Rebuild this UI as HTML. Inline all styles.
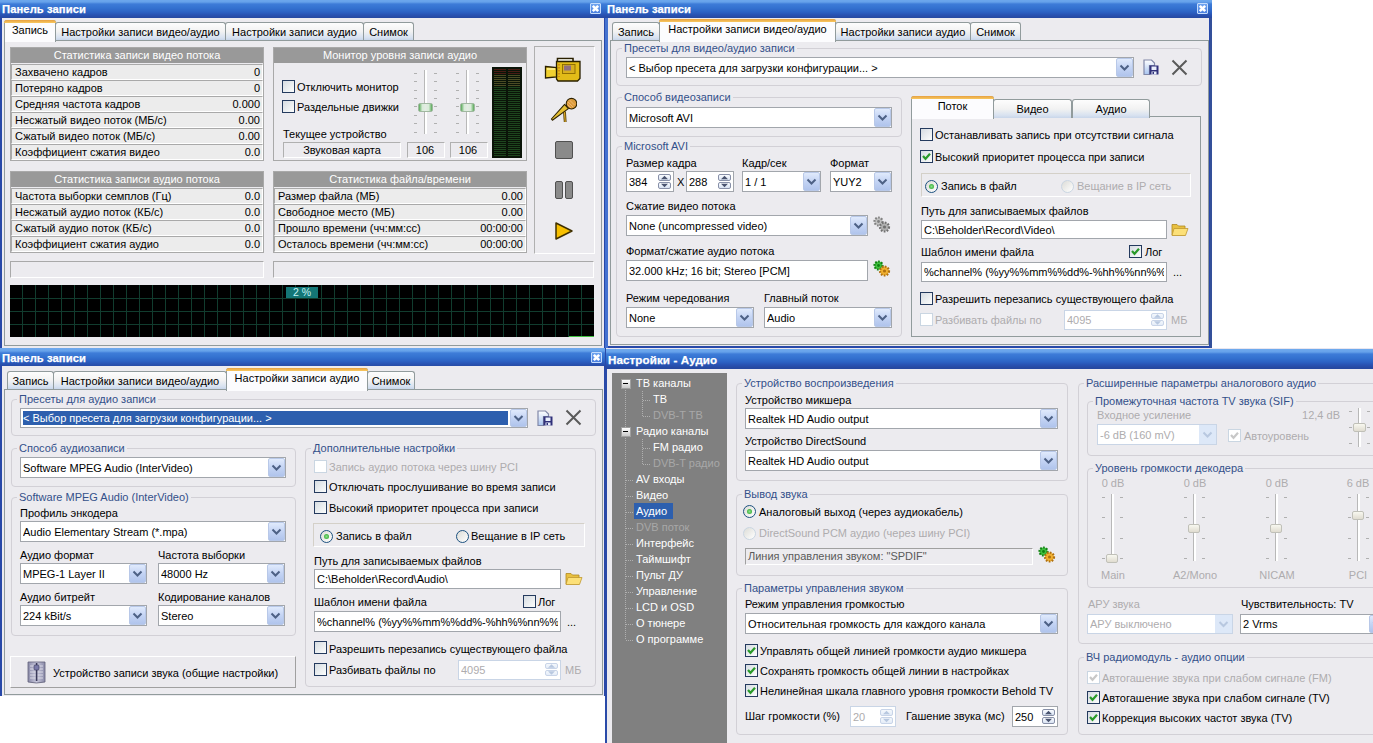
<!DOCTYPE html>
<html><head><meta charset="utf-8"><style>
html,body{margin:0;padding:0;width:1373px;height:743px;overflow:hidden;background:#fff;}
body{position:relative;font-family:"Liberation Sans", sans-serif;font-size:11px;}
div,svg{position:absolute;box-sizing:content-box;}
.t{white-space:nowrap;line-height:13px;}
</style></head><body>
<div style="left:0px;top:0px;width:607px;height:348px;background:#2848a8;"></div>
<div style="left:2px;top:17px;width:602px;height:331px;background:#ecebef;"></div>
<div style="left:0px;top:-1px;width:605px;height:19px;background:linear-gradient(to bottom,#70aaee 0px,#66a2ea 3px,#3e7cd8 5px,#3472d0 9px,#2c62c4 13px,#2852b2 16px,#2648a0 19px);"></div>
<div class="t" style="left:2px;top:3px;color:#fff;font-size:11.2px;font-weight:bold;-webkit-text-stroke:0.25px #fff;letter-spacing:0.1px;">Панель записи</div>
<div style="left:590px;top:3px;width:9px;height:9px;border:1px solid #c4dcfc;border-radius:1px;background:linear-gradient(#6ea4f0,#4a80e0);"></div>
<svg style="position:absolute;left:590px;top:3px" width="11" height="11"><path d="M2.8 2.8L8.2 8.2M8.2 2.8L2.8 8.2" stroke="#fff" stroke-width="2.6"/></svg>
<div style="left:4px;top:40px;width:596px;height:304px;border:1px solid #919b9c;background:#ecebef;"></div>
<div style="left:55px;top:22px;width:169px;height:17px;border:1px solid #919b9c;border-bottom:none;border-radius:3px 3px 0 0;background:linear-gradient(#fdfdfd,#f2f2f2 50%,#d8e2f0 85%,#c8d6ea);"></div>
<div class="t" style="left:-59.5px;width:400px;text-align:center;top:26px;color:#000;">Настройки записи видео/аудио</div>
<div style="left:225px;top:22px;width:137px;height:17px;border:1px solid #919b9c;border-bottom:none;border-radius:3px 3px 0 0;background:linear-gradient(#fdfdfd,#f2f2f2 50%,#d8e2f0 85%,#c8d6ea);"></div>
<div class="t" style="left:94.5px;width:400px;text-align:center;top:26px;color:#000;">Настройки записи аудио</div>
<div style="left:363px;top:22px;width:49px;height:17px;border:1px solid #919b9c;border-bottom:none;border-radius:3px 3px 0 0;background:linear-gradient(#fdfdfd,#f2f2f2 50%,#d8e2f0 85%,#c8d6ea);"></div>
<div class="t" style="left:188.5px;width:400px;text-align:center;top:26px;color:#000;">Снимок</div>
<div style="left:4px;top:20px;width:50px;height:21px;border:1px solid #919b9c;border-bottom:none;border-radius:3px 3px 0 0;background:#fcfcfe;"></div>
<div style="left:4px;top:20px;width:52px;height:3px;background:linear-gradient(#e6a040,#f8c860);border-radius:3px 3px 0 0;"></div>
<div class="t" style="left:-170.0px;width:400px;text-align:center;top:24px;color:#000;">Запись</div>
<div style="left:10px;top:47px;width:252px;height:112px;border:1px solid #a9a9a9;"></div>
<div style="left:11px;top:48px;width:252px;height:15px;background:#999;"></div>
<div class="t" style="left:-63.0px;width:400px;text-align:center;top:49px;color:#fff;">Статистика записи видео потока</div>
<div style="left:11px;top:64px;width:250px;height:14px;border:1px solid #a9a9a9;border-right-color:#fff;border-bottom-color:#fff;background:#ececec;"></div>
<div class="t" style="left:15px;top:65.7px;color:#000;">Захвачено кадров</div>
<div class="t" style="right:1113px;top:65.7px;color:#000;">0</div>
<div style="left:11px;top:80px;width:250px;height:14px;border:1px solid #a9a9a9;border-right-color:#fff;border-bottom-color:#fff;background:#ececec;"></div>
<div class="t" style="left:15px;top:81.7px;color:#000;">Потеряно кадров</div>
<div class="t" style="right:1113px;top:81.7px;color:#000;">0</div>
<div style="left:11px;top:96px;width:250px;height:14px;border:1px solid #a9a9a9;border-right-color:#fff;border-bottom-color:#fff;background:#ececec;"></div>
<div class="t" style="left:15px;top:97.7px;color:#000;">Средняя частота кадров</div>
<div class="t" style="right:1113px;top:97.7px;color:#000;">0.000</div>
<div style="left:11px;top:112px;width:250px;height:14px;border:1px solid #a9a9a9;border-right-color:#fff;border-bottom-color:#fff;background:#ececec;"></div>
<div class="t" style="left:15px;top:113.7px;color:#000;">Несжатый видео поток (МБ/с)</div>
<div class="t" style="right:1113px;top:113.7px;color:#000;">0.00</div>
<div style="left:11px;top:128px;width:250px;height:14px;border:1px solid #a9a9a9;border-right-color:#fff;border-bottom-color:#fff;background:#ececec;"></div>
<div class="t" style="left:15px;top:129.7px;color:#000;">Сжатый видео поток (МБ/с)</div>
<div class="t" style="right:1113px;top:129.7px;color:#000;">0.00</div>
<div style="left:11px;top:144px;width:250px;height:14px;border:1px solid #a9a9a9;border-right-color:#fff;border-bottom-color:#fff;background:#ececec;"></div>
<div class="t" style="left:15px;top:145.7px;color:#000;">Коэффициент сжатия видео</div>
<div class="t" style="right:1113px;top:145.7px;color:#000;">0.0</div>
<div style="left:10px;top:171px;width:252px;height:80px;border:1px solid #a9a9a9;"></div>
<div style="left:11px;top:172px;width:252px;height:15px;background:#999;"></div>
<div class="t" style="left:-63.0px;width:400px;text-align:center;top:173px;color:#fff;">Статистика записи аудио потока</div>
<div style="left:11px;top:188px;width:250px;height:14px;border:1px solid #a9a9a9;border-right-color:#fff;border-bottom-color:#fff;background:#ececec;"></div>
<div class="t" style="left:15px;top:189.7px;color:#000;">Частота выборки семплов (Гц)</div>
<div class="t" style="right:1113px;top:189.7px;color:#000;">0.0</div>
<div style="left:11px;top:204px;width:250px;height:14px;border:1px solid #a9a9a9;border-right-color:#fff;border-bottom-color:#fff;background:#ececec;"></div>
<div class="t" style="left:15px;top:205.7px;color:#000;">Несжатый аудио поток (КБ/с)</div>
<div class="t" style="right:1113px;top:205.7px;color:#000;">0.0</div>
<div style="left:11px;top:220px;width:250px;height:14px;border:1px solid #a9a9a9;border-right-color:#fff;border-bottom-color:#fff;background:#ececec;"></div>
<div class="t" style="left:15px;top:221.7px;color:#000;">Сжатый аудио поток (КБ/с)</div>
<div class="t" style="right:1113px;top:221.7px;color:#000;">0.0</div>
<div style="left:11px;top:236px;width:250px;height:14px;border:1px solid #a9a9a9;border-right-color:#fff;border-bottom-color:#fff;background:#ececec;"></div>
<div class="t" style="left:15px;top:237.7px;color:#000;">Коэффициент сжатия аудио</div>
<div class="t" style="right:1113px;top:237.7px;color:#000;">0.0</div>
<div style="left:273px;top:171px;width:252px;height:80px;border:1px solid #a9a9a9;"></div>
<div style="left:274px;top:172px;width:252px;height:15px;background:#999;"></div>
<div class="t" style="left:200.0px;width:400px;text-align:center;top:173px;color:#fff;">Статистика файла/времени</div>
<div style="left:274px;top:188px;width:250px;height:14px;border:1px solid #a9a9a9;border-right-color:#fff;border-bottom-color:#fff;background:#ececec;"></div>
<div class="t" style="left:278px;top:189.7px;color:#000;">Размер файла (МБ)</div>
<div class="t" style="right:850px;top:189.7px;color:#000;">0.00</div>
<div style="left:274px;top:204px;width:250px;height:14px;border:1px solid #a9a9a9;border-right-color:#fff;border-bottom-color:#fff;background:#ececec;"></div>
<div class="t" style="left:278px;top:205.7px;color:#000;">Свободное место (МБ)</div>
<div class="t" style="right:850px;top:205.7px;color:#000;">0.00</div>
<div style="left:274px;top:220px;width:250px;height:14px;border:1px solid #a9a9a9;border-right-color:#fff;border-bottom-color:#fff;background:#ececec;"></div>
<div class="t" style="left:278px;top:221.7px;color:#000;">Прошло времени (чч:мм:сс)</div>
<div class="t" style="right:850px;top:221.7px;color:#000;">00:00:00</div>
<div style="left:274px;top:236px;width:250px;height:14px;border:1px solid #a9a9a9;border-right-color:#fff;border-bottom-color:#fff;background:#ececec;"></div>
<div class="t" style="left:278px;top:237.7px;color:#000;">Осталось времени (чч:мм:сс)</div>
<div class="t" style="right:850px;top:237.7px;color:#000;">00:00:00</div>
<div style="left:273px;top:47px;width:252px;height:112px;border:1px solid #a9a9a9;"></div>
<div style="left:274px;top:48px;width:252px;height:15px;background:#999;"></div>
<div class="t" style="left:200px;width:400px;text-align:center;top:49px;color:#fff;">Монитор уровня записи аудио</div>
<div style="left:282px;top:80px;width:11px;height:11px;border:1px solid #243a5e;background:linear-gradient(135deg,#d6dce2,#fcfdfc);"></div>
<div class="t" style="left:297px;top:81px;color:#000;">Отключить монитор</div>
<div style="left:282px;top:100px;width:11px;height:11px;border:1px solid #243a5e;background:linear-gradient(135deg,#d6dce2,#fcfdfc);"></div>
<div class="t" style="left:297px;top:101px;color:#000;">Раздельные движки</div>
<div class="t" style="left:283px;top:128px;color:#000;">Текущее устройство</div>
<div style="left:283px;top:142px;width:116px;height:14px;border:1px solid #fff;border-top-color:#b0b0b0;border-left-color:#b0b0b0;"></div>
<div class="t" style="left:142px;width:400px;text-align:center;top:144px;color:#000;">Звуковая карта</div>
<div style="left:407px;top:142px;width:36px;height:14px;border:1px solid #fff;border-top-color:#b0b0b0;border-left-color:#b0b0b0;"></div>
<div class="t" style="left:225px;width:400px;text-align:center;top:144px;color:#000;">106</div>
<div style="left:450px;top:142px;width:36px;height:14px;border:1px solid #fff;border-top-color:#b0b0b0;border-left-color:#b0b0b0;"></div>
<div class="t" style="left:268px;width:400px;text-align:center;top:144px;color:#000;">106</div>
<div style="left:424px;top:70px;width:1px;height:64px;background:#b8b8b8;"></div>
<div style="left:425px;top:70px;width:2px;height:64px;background:#fff;"></div>
<div style="left:414px;top:73px;width:3px;height:1px;background:#b0b0b0;"></div>
<div style="left:434px;top:73px;width:3px;height:1px;background:#b0b0b0;"></div>
<div style="left:414px;top:81px;width:3px;height:1px;background:#b0b0b0;"></div>
<div style="left:434px;top:81px;width:3px;height:1px;background:#b0b0b0;"></div>
<div style="left:414px;top:90px;width:3px;height:1px;background:#b0b0b0;"></div>
<div style="left:434px;top:90px;width:3px;height:1px;background:#b0b0b0;"></div>
<div style="left:414px;top:98px;width:3px;height:1px;background:#b0b0b0;"></div>
<div style="left:434px;top:98px;width:3px;height:1px;background:#b0b0b0;"></div>
<div style="left:414px;top:106px;width:3px;height:1px;background:#b0b0b0;"></div>
<div style="left:434px;top:106px;width:3px;height:1px;background:#b0b0b0;"></div>
<div style="left:414px;top:115px;width:3px;height:1px;background:#b0b0b0;"></div>
<div style="left:434px;top:115px;width:3px;height:1px;background:#b0b0b0;"></div>
<div style="left:414px;top:123px;width:3px;height:1px;background:#b0b0b0;"></div>
<div style="left:434px;top:123px;width:3px;height:1px;background:#b0b0b0;"></div>
<div style="left:414px;top:132px;width:3px;height:1px;background:#b0b0b0;"></div>
<div style="left:434px;top:132px;width:3px;height:1px;background:#b0b0b0;"></div>
<div style="left:418px;top:103px;width:13px;height:7px;border:1px solid #a0b8a0;border-radius:2px;background:linear-gradient(90deg,#58a858,#d8ecd8 25%,#e4ece4 50%,#d8ecd8 75%,#58a858);"></div>
<div style="left:466px;top:70px;width:1px;height:64px;background:#b8b8b8;"></div>
<div style="left:467px;top:70px;width:2px;height:64px;background:#fff;"></div>
<div style="left:456px;top:73px;width:3px;height:1px;background:#b0b0b0;"></div>
<div style="left:476px;top:73px;width:3px;height:1px;background:#b0b0b0;"></div>
<div style="left:456px;top:81px;width:3px;height:1px;background:#b0b0b0;"></div>
<div style="left:476px;top:81px;width:3px;height:1px;background:#b0b0b0;"></div>
<div style="left:456px;top:90px;width:3px;height:1px;background:#b0b0b0;"></div>
<div style="left:476px;top:90px;width:3px;height:1px;background:#b0b0b0;"></div>
<div style="left:456px;top:98px;width:3px;height:1px;background:#b0b0b0;"></div>
<div style="left:476px;top:98px;width:3px;height:1px;background:#b0b0b0;"></div>
<div style="left:456px;top:106px;width:3px;height:1px;background:#b0b0b0;"></div>
<div style="left:476px;top:106px;width:3px;height:1px;background:#b0b0b0;"></div>
<div style="left:456px;top:115px;width:3px;height:1px;background:#b0b0b0;"></div>
<div style="left:476px;top:115px;width:3px;height:1px;background:#b0b0b0;"></div>
<div style="left:456px;top:123px;width:3px;height:1px;background:#b0b0b0;"></div>
<div style="left:476px;top:123px;width:3px;height:1px;background:#b0b0b0;"></div>
<div style="left:456px;top:132px;width:3px;height:1px;background:#b0b0b0;"></div>
<div style="left:476px;top:132px;width:3px;height:1px;background:#b0b0b0;"></div>
<div style="left:460px;top:103px;width:13px;height:7px;border:1px solid #a0b8a0;border-radius:2px;background:linear-gradient(90deg,#58a858,#d8ecd8 25%,#e4ece4 50%,#d8ecd8 75%,#58a858);"></div>
<div style="left:492px;top:67px;width:30px;height:91px;background:#0a1408;"></div>
<svg style="position:absolute;left:492px;top:67px" width="30" height="91"><rect x="2" y="2" width="12" height="1" fill="#481c14"/><rect x="16" y="2" width="12" height="1" fill="#481c14"/><rect x="2" y="4" width="12" height="1" fill="#481c14"/><rect x="16" y="4" width="12" height="1" fill="#481c14"/><rect x="2" y="6" width="12" height="1" fill="#481c14"/><rect x="16" y="6" width="12" height="1" fill="#481c14"/><rect x="2" y="8" width="12" height="1" fill="#4a4c24"/><rect x="16" y="8" width="12" height="1" fill="#4a4c24"/><rect x="2" y="10" width="12" height="1" fill="#4a4c24"/><rect x="16" y="10" width="12" height="1" fill="#4a4c24"/><rect x="2" y="12" width="12" height="1" fill="#4a4c24"/><rect x="16" y="12" width="12" height="1" fill="#4a4c24"/><rect x="2" y="14" width="12" height="1" fill="#4a4c24"/><rect x="16" y="14" width="12" height="1" fill="#4a4c24"/><rect x="2" y="16" width="12" height="1" fill="#4a4c24"/><rect x="16" y="16" width="12" height="1" fill="#4a4c24"/><rect x="2" y="18" width="12" height="1" fill="#4a4c24"/><rect x="16" y="18" width="12" height="1" fill="#4a4c24"/><rect x="2" y="20" width="12" height="1" fill="#1e461e"/><rect x="16" y="20" width="12" height="1" fill="#1e461e"/><rect x="2" y="22" width="12" height="1" fill="#1e461e"/><rect x="16" y="22" width="12" height="1" fill="#1e461e"/><rect x="2" y="24" width="12" height="1" fill="#1e461e"/><rect x="16" y="24" width="12" height="1" fill="#1e461e"/><rect x="2" y="26" width="12" height="1" fill="#1e461e"/><rect x="16" y="26" width="12" height="1" fill="#1e461e"/><rect x="2" y="28" width="12" height="1" fill="#1e461e"/><rect x="16" y="28" width="12" height="1" fill="#1e461e"/><rect x="2" y="30" width="12" height="1" fill="#1e461e"/><rect x="16" y="30" width="12" height="1" fill="#1e461e"/><rect x="2" y="32" width="12" height="1" fill="#1e461e"/><rect x="16" y="32" width="12" height="1" fill="#1e461e"/><rect x="2" y="34" width="12" height="1" fill="#1e461e"/><rect x="16" y="34" width="12" height="1" fill="#1e461e"/><rect x="2" y="36" width="12" height="1" fill="#1e461e"/><rect x="16" y="36" width="12" height="1" fill="#1e461e"/><rect x="2" y="38" width="12" height="1" fill="#1e461e"/><rect x="16" y="38" width="12" height="1" fill="#1e461e"/><rect x="2" y="40" width="12" height="1" fill="#1e461e"/><rect x="16" y="40" width="12" height="1" fill="#1e461e"/><rect x="2" y="42" width="12" height="1" fill="#1e461e"/><rect x="16" y="42" width="12" height="1" fill="#1e461e"/><rect x="2" y="44" width="12" height="1" fill="#1e461e"/><rect x="16" y="44" width="12" height="1" fill="#1e461e"/><rect x="2" y="46" width="12" height="1" fill="#1e461e"/><rect x="16" y="46" width="12" height="1" fill="#1e461e"/><rect x="2" y="48" width="12" height="1" fill="#1e461e"/><rect x="16" y="48" width="12" height="1" fill="#1e461e"/><rect x="2" y="50" width="12" height="1" fill="#1e461e"/><rect x="16" y="50" width="12" height="1" fill="#1e461e"/><rect x="2" y="52" width="12" height="1" fill="#1e461e"/><rect x="16" y="52" width="12" height="1" fill="#1e461e"/><rect x="2" y="54" width="12" height="1" fill="#1e461e"/><rect x="16" y="54" width="12" height="1" fill="#1e461e"/><rect x="2" y="56" width="12" height="1" fill="#1e461e"/><rect x="16" y="56" width="12" height="1" fill="#1e461e"/><rect x="2" y="58" width="12" height="1" fill="#1e461e"/><rect x="16" y="58" width="12" height="1" fill="#1e461e"/><rect x="2" y="60" width="12" height="1" fill="#1e461e"/><rect x="16" y="60" width="12" height="1" fill="#1e461e"/><rect x="2" y="62" width="12" height="1" fill="#1e461e"/><rect x="16" y="62" width="12" height="1" fill="#1e461e"/><rect x="2" y="64" width="12" height="1" fill="#1e461e"/><rect x="16" y="64" width="12" height="1" fill="#1e461e"/><rect x="2" y="66" width="12" height="1" fill="#1e461e"/><rect x="16" y="66" width="12" height="1" fill="#1e461e"/><rect x="2" y="68" width="12" height="1" fill="#1e461e"/><rect x="16" y="68" width="12" height="1" fill="#1e461e"/><rect x="2" y="70" width="12" height="1" fill="#1e461e"/><rect x="16" y="70" width="12" height="1" fill="#1e461e"/><rect x="2" y="72" width="12" height="1" fill="#1e461e"/><rect x="16" y="72" width="12" height="1" fill="#1e461e"/><rect x="2" y="74" width="12" height="1" fill="#1e461e"/><rect x="16" y="74" width="12" height="1" fill="#1e461e"/><rect x="2" y="76" width="12" height="1" fill="#1e461e"/><rect x="16" y="76" width="12" height="1" fill="#1e461e"/><rect x="2" y="78" width="12" height="1" fill="#1e461e"/><rect x="16" y="78" width="12" height="1" fill="#1e461e"/><rect x="2" y="80" width="12" height="1" fill="#1e461e"/><rect x="16" y="80" width="12" height="1" fill="#1e461e"/><rect x="2" y="82" width="12" height="1" fill="#1e461e"/><rect x="16" y="82" width="12" height="1" fill="#1e461e"/><rect x="2" y="84" width="12" height="1" fill="#1e461e"/><rect x="16" y="84" width="12" height="1" fill="#1e461e"/><rect x="2" y="86" width="12" height="1" fill="#1e461e"/><rect x="16" y="86" width="12" height="1" fill="#1e461e"/><rect x="2" y="88" width="12" height="1" fill="#1e461e"/><rect x="16" y="88" width="12" height="1" fill="#1e461e"/></svg>
<div style="left:534px;top:46px;width:59px;height:206px;border:1px solid #b0b0b0;border-right-color:#fff;border-bottom-color:#fff;"></div>
<svg style="position:absolute;left:544px;top:56px" width="38" height="28" viewBox="0 0 38 28">
<path d="M13.5 7V2.5H29V6" stroke="#2a2000" stroke-width="1.6" fill="none"/>
<path d="M15 7V4.2H27.5V6.5" stroke="#f8f8e8" stroke-width="1.2" fill="none"/>
<path d="M12.5 5.5H36V22.5L33.5 25H14L12.5 23Z" fill="#e2bc18" stroke="#2a2000" stroke-width="1.3"/>
<path d="M1.5 10.5L12.5 11.5V21L1.5 22Z" fill="#f0d030" stroke="#2a2000" stroke-width="1.3"/>
<path d="M3 13H11" stroke="#fff4a0" stroke-width="1.5"/>
<rect x="18.5" y="8.5" width="12.5" height="9" fill="#d8b020" stroke="#8a6a00" stroke-width="0.9"/>
<rect x="20" y="9.5" width="7" height="5" fill="#907080"/>
<path d="M15 8V21" stroke="#c87010" stroke-width="1.2" stroke-dasharray="1.5 1.5"/>
</svg>
<svg style="position:absolute;left:549px;top:95px" width="28" height="30" viewBox="0 0 28 30">
<path d="M15.5 16.5L16.2 27" stroke="#4a3400" stroke-width="2.8"/><path d="M15.5 16.5L16.2 27" stroke="#d8a828" stroke-width="1.3"/>
<path d="M15.6 9.4L19.4 13.6L3.4 25.2L2.4 24Z" fill="#e6c034" stroke="#2e2200" stroke-width="1.1" stroke-linejoin="round"/>
<circle cx="22.5" cy="8.7" r="5.3" fill="#dc9c3c" stroke="#2e2200" stroke-width="1.1"/>
<path d="M19 7L24 12M20.5 5L25.5 10M18.5 9.5L22 13" stroke="#f0b878" stroke-width="0.9"/>
</svg>
<div style="left:555px;top:141px;width:16px;height:16px;border:1px solid #505050;border-radius:2px;background:#8a8a8a;"></div>
<div style="left:555px;top:181px;width:6px;height:16px;border:1px solid #505050;border-radius:2px;background:#8a8a8a;"></div>
<div style="left:565px;top:181px;width:6px;height:16px;border:1px solid #505050;border-radius:2px;background:#8a8a8a;"></div>
<svg style="position:absolute;left:554px;top:221px" width="20" height="20"><path d="M2 2L18 10L2 18z" fill="#f8c000" stroke="#403000" stroke-width="1.5" stroke-linejoin="round"/></svg>
<div style="left:10px;top:261px;width:252px;height:15px;border:1px solid #fff;border-top-color:#a9a9a9;border-left-color:#a9a9a9;"></div>
<div style="left:273px;top:261px;width:319px;height:15px;border:1px solid #fff;border-top-color:#a9a9a9;border-left-color:#a9a9a9;"></div>
<svg style="position:absolute;left:10px;top:285px" width="584" height="52" shape-rendering="crispEdges"><rect width="584" height="52" fill="#000"/><rect x="-1" y="0" width="1" height="52" fill="#113c2e"/><rect x="12" y="0" width="1" height="52" fill="#113c2e"/><rect x="25" y="0" width="1" height="52" fill="#113c2e"/><rect x="38" y="0" width="1" height="52" fill="#113c2e"/><rect x="51" y="0" width="1" height="52" fill="#113c2e"/><rect x="64" y="0" width="1" height="52" fill="#113c2e"/><rect x="77" y="0" width="1" height="52" fill="#113c2e"/><rect x="90" y="0" width="1" height="52" fill="#113c2e"/><rect x="103" y="0" width="1" height="52" fill="#113c2e"/><rect x="116" y="0" width="1" height="52" fill="#113c2e"/><rect x="129" y="0" width="1" height="52" fill="#113c2e"/><rect x="142" y="0" width="1" height="52" fill="#113c2e"/><rect x="155" y="0" width="1" height="52" fill="#113c2e"/><rect x="168" y="0" width="1" height="52" fill="#113c2e"/><rect x="181" y="0" width="1" height="52" fill="#113c2e"/><rect x="194" y="0" width="1" height="52" fill="#113c2e"/><rect x="207" y="0" width="1" height="52" fill="#113c2e"/><rect x="220" y="0" width="1" height="52" fill="#113c2e"/><rect x="233" y="0" width="1" height="52" fill="#113c2e"/><rect x="246" y="0" width="1" height="52" fill="#113c2e"/><rect x="259" y="0" width="1" height="52" fill="#113c2e"/><rect x="272" y="0" width="1" height="52" fill="#113c2e"/><rect x="285" y="0" width="1" height="52" fill="#113c2e"/><rect x="298" y="0" width="1" height="52" fill="#113c2e"/><rect x="311" y="0" width="1" height="52" fill="#113c2e"/><rect x="324" y="0" width="1" height="52" fill="#113c2e"/><rect x="337" y="0" width="1" height="52" fill="#113c2e"/><rect x="350" y="0" width="1" height="52" fill="#113c2e"/><rect x="363" y="0" width="1" height="52" fill="#113c2e"/><rect x="376" y="0" width="1" height="52" fill="#113c2e"/><rect x="389" y="0" width="1" height="52" fill="#113c2e"/><rect x="402" y="0" width="1" height="52" fill="#113c2e"/><rect x="415" y="0" width="1" height="52" fill="#113c2e"/><rect x="428" y="0" width="1" height="52" fill="#113c2e"/><rect x="441" y="0" width="1" height="52" fill="#113c2e"/><rect x="454" y="0" width="1" height="52" fill="#113c2e"/><rect x="467" y="0" width="1" height="52" fill="#113c2e"/><rect x="480" y="0" width="1" height="52" fill="#113c2e"/><rect x="493" y="0" width="1" height="52" fill="#113c2e"/><rect x="506" y="0" width="1" height="52" fill="#113c2e"/><rect x="519" y="0" width="1" height="52" fill="#113c2e"/><rect x="532" y="0" width="1" height="52" fill="#113c2e"/><rect x="545" y="0" width="1" height="52" fill="#113c2e"/><rect x="558" y="0" width="1" height="52" fill="#113c2e"/><rect x="571" y="0" width="1" height="52" fill="#113c2e"/><rect x="584" y="0" width="1" height="52" fill="#113c2e"/><rect x="0" y="13" width="584" height="1" fill="#113c2e"/><rect x="0" y="26" width="584" height="1" fill="#113c2e"/><rect x="0" y="39" width="584" height="1" fill="#113c2e"/><rect x="276" y="2" width="32" height="11" fill="#147676"/><rect x="559" y="51" width="25" height="1" fill="#40c040"/></svg>
<div class="t" style="left:102px;width:400px;text-align:center;top:286px;color:#c8f4f4;font-size:10.5px;">2 %</div>
<div style="left:605px;top:0px;width:607px;height:348px;background:#2848a8;"></div>
<div style="left:605px;top:0px;width:3px;height:348px;background:#4472d0;"></div>
<div style="left:1210px;top:0px;width:2px;height:348px;background:#34509a;"></div>
<div style="left:608px;top:17px;width:601px;height:329px;background:#ecebef;"></div>
<div style="left:605px;top:-1px;width:607px;height:19px;background:linear-gradient(to bottom,#70aaee 0px,#66a2ea 3px,#3e7cd8 5px,#3472d0 9px,#2c62c4 13px,#2852b2 16px,#2648a0 19px);"></div>
<div class="t" style="left:607px;top:3px;color:#fff;font-size:11.2px;font-weight:bold;-webkit-text-stroke:0.25px #fff;letter-spacing:0.1px;">Панель записи</div>
<div style="left:1197px;top:3px;width:9px;height:9px;border:1px solid #c4dcfc;border-radius:1px;background:linear-gradient(#6ea4f0,#4a80e0);"></div>
<svg style="position:absolute;left:1197px;top:3px" width="11" height="11"><path d="M2.8 2.8L8.2 8.2M8.2 2.8L2.8 8.2" stroke="#fff" stroke-width="2.6"/></svg>
<div style="left:610px;top:40px;width:597px;height:303px;border:1px solid #919b9c;background:#ecebef;"></div>
<div style="left:612px;top:22px;width:46px;height:17px;border:1px solid #919b9c;border-bottom:none;border-radius:3px 3px 0 0;background:linear-gradient(#fdfdfd,#f2f2f2 50%,#d8e2f0 85%,#c8d6ea);"></div>
<div class="t" style="left:436.0px;width:400px;text-align:center;top:26px;color:#000;">Запись</div>
<div style="left:835px;top:22px;width:134px;height:17px;border:1px solid #919b9c;border-bottom:none;border-radius:3px 3px 0 0;background:linear-gradient(#fdfdfd,#f2f2f2 50%,#d8e2f0 85%,#c8d6ea);"></div>
<div class="t" style="left:703.0px;width:400px;text-align:center;top:26px;color:#000;">Настройки записи аудио</div>
<div style="left:970px;top:22px;width:49px;height:17px;border:1px solid #919b9c;border-bottom:none;border-radius:3px 3px 0 0;background:linear-gradient(#fdfdfd,#f2f2f2 50%,#d8e2f0 85%,#c8d6ea);"></div>
<div class="t" style="left:795.5px;width:400px;text-align:center;top:26px;color:#000;">Снимок</div>
<div style="left:659px;top:19px;width:175px;height:22px;border:1px solid #919b9c;border-bottom:none;border-radius:3px 3px 0 0;background:#fcfcfe;"></div>
<div style="left:659px;top:19px;width:177px;height:3px;background:linear-gradient(#e6a040,#f8c860);border-radius:3px 3px 0 0;"></div>
<div class="t" style="left:547.5px;width:400px;text-align:center;top:23px;color:#000;">Настройки записи видео/аудио</div>
<div style="left:616px;top:48px;width:584px;height:36px;border:1px solid #d2d0d6;border-radius:4px;"></div>
<div class="t" style="left:622px;top:42px;padding:0 2px;background:#ecebef;color:#33508a;">Пресеты для видео/аудио записи</div>
<svg style="position:absolute;left:1143px;top:59px" width="17" height="17" viewBox="0 0 17 17">
<defs><linearGradient id="sg1143" x1="0" y1="0" x2="0" y2="1"><stop offset="0" stop-color="#ffffff"/><stop offset="1" stop-color="#a8c4f0"/></linearGradient></defs>
<path d="M1 1H8.5L11.5 4V6.5H6.5V15.5H1Z" fill="url(#sg1143)" stroke="#8088a8" stroke-width="1.2"/>
<path d="M6.5 6.5H15.5V15.5H6.5Z" fill="#30307a"/>
<rect x="8.5" y="7.5" width="5" height="3.5" fill="#e8eefc"/>
<rect x="8.5" y="12.5" width="5" height="3" fill="#e8eefc"/><rect x="9.5" y="13" width="1.5" height="2" fill="#30307a"/>
</svg>
<svg style="position:absolute;left:1171px;top:59px" width="17" height="17"><path d="M1.5 1.5L15.5 15.5M15.5 1.5L1.5 15.5" stroke="#5a5a5a" stroke-width="2"/></svg>
<div style="left:626px;top:57px;width:506px;height:19px;border:1px solid #a2a6ac;background:#fff;"></div>
<div style="left:1116px;top:58px;width:15px;height:17px;border:1px solid #b8c8e8;border-radius:2px;background:linear-gradient(#e0eafc,#c4d4f4 50%,#b0c4ec);"></div>
<svg style="position:absolute;left:1116px;top:58px" width="17" height="19"><path d="M4.5 7.5L8.5 11.5L12.5 7.5" stroke="#4d6185" stroke-width="2" fill="none"/></svg>
<div class="t" style="left:629px;top:61.5px;color:#000;width:485px;overflow:hidden;">&lt; Выбор пресета для загрузки конфигурации... &gt;</div>
<div style="left:616px;top:97px;width:284px;height:38px;border:1px solid #d2d0d6;border-radius:4px;"></div>
<div class="t" style="left:622px;top:91px;padding:0 2px;background:#ecebef;color:#33508a;">Способ видеозаписи</div>
<div style="left:626px;top:107px;width:264px;height:19px;border:1px solid #a2a6ac;background:#fff;"></div>
<div style="left:874px;top:108px;width:15px;height:17px;border:1px solid #b8c8e8;border-radius:2px;background:linear-gradient(#e0eafc,#c4d4f4 50%,#b0c4ec);"></div>
<svg style="position:absolute;left:874px;top:108px" width="17" height="19"><path d="M4.5 7.5L8.5 11.5L12.5 7.5" stroke="#4d6185" stroke-width="2" fill="none"/></svg>
<div class="t" style="left:629px;top:111.5px;color:#000;width:243px;overflow:hidden;">Microsoft AVI</div>
<div style="left:616px;top:146px;width:284px;height:189px;border:1px solid #d2d0d6;border-radius:4px;"></div>
<div class="t" style="left:622px;top:140px;padding:0 2px;background:#ecebef;color:#33508a;">Microsoft AVI</div>
<div class="t" style="left:626px;top:157px;color:#000;">Размер кадра</div>
<div class="t" style="left:742px;top:157px;color:#000;">Кадр/сек</div>
<div class="t" style="left:830px;top:157px;color:#000;">Формат</div>
<div style="left:626px;top:171px;width:46px;height:19px;border:1px solid #a2a6ac;background:#fff;"></div>
<div class="t" style="left:629px;top:175.5px;color:#000;width:42px;overflow:hidden;">384</div>
<div style="left:658px;top:174px;width:11px;height:5px;border:1px solid #8890a8;border-radius:2px;background:linear-gradient(#fafcff,#d8e2f2);"></div>
<div style="left:658px;top:182px;width:11px;height:5px;border:1px solid #8890a8;border-radius:2px;background:linear-gradient(#fafcff,#d8e2f2);"></div>
<svg style="position:absolute;left:658px;top:174px" width="13" height="17"><path d="M3.0 5.3L6.5 1.7L10.0 5.3Z M3.0 9.7L6.5 13.3L10.0 9.7Z" fill="#4a5470"/></svg>
<div class="t" style="left:677px;top:176px;color:#000;">X</div>
<div style="left:686px;top:171px;width:46px;height:19px;border:1px solid #a2a6ac;background:#fff;"></div>
<div class="t" style="left:689px;top:175.5px;color:#000;width:42px;overflow:hidden;">288</div>
<div style="left:718px;top:174px;width:11px;height:5px;border:1px solid #8890a8;border-radius:2px;background:linear-gradient(#fafcff,#d8e2f2);"></div>
<div style="left:718px;top:182px;width:11px;height:5px;border:1px solid #8890a8;border-radius:2px;background:linear-gradient(#fafcff,#d8e2f2);"></div>
<svg style="position:absolute;left:718px;top:174px" width="13" height="17"><path d="M3.0 5.3L6.5 1.7L10.0 5.3Z M3.0 9.7L6.5 13.3L10.0 9.7Z" fill="#4a5470"/></svg>
<div style="left:742px;top:171px;width:77px;height:19px;border:1px solid #a2a6ac;background:#fff;"></div>
<div style="left:803px;top:172px;width:15px;height:17px;border:1px solid #b8c8e8;border-radius:2px;background:linear-gradient(#e0eafc,#c4d4f4 50%,#b0c4ec);"></div>
<svg style="position:absolute;left:803px;top:172px" width="17" height="19"><path d="M4.5 7.5L8.5 11.5L12.5 7.5" stroke="#4d6185" stroke-width="2" fill="none"/></svg>
<div class="t" style="left:745px;top:175.5px;color:#000;width:56px;overflow:hidden;">1 / 1</div>
<div style="left:830px;top:171px;width:60px;height:19px;border:1px solid #a2a6ac;background:#fff;"></div>
<div style="left:874px;top:172px;width:15px;height:17px;border:1px solid #b8c8e8;border-radius:2px;background:linear-gradient(#e0eafc,#c4d4f4 50%,#b0c4ec);"></div>
<svg style="position:absolute;left:874px;top:172px" width="17" height="19"><path d="M4.5 7.5L8.5 11.5L12.5 7.5" stroke="#4d6185" stroke-width="2" fill="none"/></svg>
<div class="t" style="left:833px;top:175.5px;color:#000;width:39px;overflow:hidden;">YUY2</div>
<div class="t" style="left:626px;top:200px;color:#000;">Сжатие видео потока</div>
<div style="left:626px;top:215px;width:240px;height:19px;border:1px solid #a2a6ac;background:#fff;"></div>
<div style="left:850px;top:216px;width:15px;height:17px;border:1px solid #b8c8e8;border-radius:2px;background:linear-gradient(#e0eafc,#c4d4f4 50%,#b0c4ec);"></div>
<svg style="position:absolute;left:850px;top:216px" width="17" height="19"><path d="M4.5 7.5L8.5 11.5L12.5 7.5" stroke="#4d6185" stroke-width="2" fill="none"/></svg>
<div class="t" style="left:629px;top:219.5px;color:#000;width:219px;overflow:hidden;">None (uncompressed video)</div>
<svg style="position:absolute;left:872px;top:215px" width="20" height="20"><circle cx="6.5" cy="6.5" r="4" fill="#c0c0c0" stroke="#808080" stroke-width="2.2" stroke-dasharray="1.6 1.4"/><circle cx="6.5" cy="6.5" r="1.40" fill="#808080"/><circle cx="12.5" cy="12" r="4.5" fill="#b0b0b0" stroke="#707070" stroke-width="2.2" stroke-dasharray="1.6 1.4"/><circle cx="12.5" cy="12" r="1.57" fill="#707070"/></svg>
<div class="t" style="left:626px;top:245px;color:#000;">Формат/сжатие аудио потока</div>
<div style="left:626px;top:260px;width:240px;height:19px;border:1px solid #a2a6ac;background:#fff;"></div>
<div class="t" style="left:629px;top:264.5px;color:#000;width:236px;overflow:hidden;">32.000 kHz; 16 bit; Stereo [PCM]</div>
<svg style="position:absolute;left:872px;top:259px" width="20" height="20"><circle cx="6.5" cy="6.5" r="4" fill="#40c040" stroke="#108010" stroke-width="2.2" stroke-dasharray="1.6 1.4"/><circle cx="6.5" cy="6.5" r="1.40" fill="#108010"/><circle cx="12.5" cy="12" r="4.5" fill="#f0b030" stroke="#b07010" stroke-width="2.2" stroke-dasharray="1.6 1.4"/><circle cx="12.5" cy="12" r="1.57" fill="#b07010"/></svg>
<div class="t" style="left:626px;top:292px;color:#000;">Режим чередования</div>
<div class="t" style="left:764px;top:292px;color:#000;">Главный поток</div>
<div style="left:626px;top:307px;width:126px;height:19px;border:1px solid #a2a6ac;background:#fff;"></div>
<div style="left:736px;top:308px;width:15px;height:17px;border:1px solid #b8c8e8;border-radius:2px;background:linear-gradient(#e0eafc,#c4d4f4 50%,#b0c4ec);"></div>
<svg style="position:absolute;left:736px;top:308px" width="17" height="19"><path d="M4.5 7.5L8.5 11.5L12.5 7.5" stroke="#4d6185" stroke-width="2" fill="none"/></svg>
<div class="t" style="left:629px;top:311.5px;color:#000;width:105px;overflow:hidden;">None</div>
<div style="left:764px;top:307px;width:126px;height:19px;border:1px solid #a2a6ac;background:#fff;"></div>
<div style="left:874px;top:308px;width:15px;height:17px;border:1px solid #b8c8e8;border-radius:2px;background:linear-gradient(#e0eafc,#c4d4f4 50%,#b0c4ec);"></div>
<svg style="position:absolute;left:874px;top:308px" width="17" height="19"><path d="M4.5 7.5L8.5 11.5L12.5 7.5" stroke="#4d6185" stroke-width="2" fill="none"/></svg>
<div class="t" style="left:767px;top:311.5px;color:#000;width:105px;overflow:hidden;">Audio</div>
<div style="left:911px;top:116px;width:288px;height:219px;border:1px solid #919b9c;background:#ecebef;"></div>
<div style="left:993px;top:99px;width:77px;height:18px;border:1px solid #919b9c;border-bottom:none;border-radius:3px 3px 0 0;background:linear-gradient(#fdfdfd,#f2f2f2 50%,#d8e2f0 85%,#c8d6ea);"></div>
<div class="t" style="left:832.5px;width:400px;text-align:center;top:103px;color:#000;">Видео</div>
<div style="left:1072px;top:99px;width:76px;height:18px;border:1px solid #919b9c;border-bottom:none;border-radius:3px 3px 0 0;background:linear-gradient(#fdfdfd,#f2f2f2 50%,#d8e2f0 85%,#c8d6ea);"></div>
<div class="t" style="left:911.0px;width:400px;text-align:center;top:103px;color:#000;">Аудио</div>
<div style="left:911px;top:96px;width:81px;height:22px;border:1px solid #919b9c;border-bottom:none;border-radius:3px 3px 0 0;background:#fcfcfe;"></div>
<div style="left:911px;top:96px;width:83px;height:3px;background:linear-gradient(#e6a040,#f8c860);border-radius:3px 3px 0 0;"></div>
<div class="t" style="left:752.5px;width:400px;text-align:center;top:100px;color:#000;">Поток</div>
<div style="left:920px;top:128px;width:11px;height:11px;border:1px solid #243a5e;background:linear-gradient(135deg,#d6dce2,#fcfdfc);"></div>
<div class="t" style="left:935px;top:129px;color:#000;">Останавливать запись при отсутствии сигнала</div>
<div style="left:920px;top:150px;width:11px;height:11px;border:1px solid #243a5e;background:linear-gradient(135deg,#d6dce2,#fcfdfc);"></div>
<svg style="position:absolute;left:920px;top:150px" width="13" height="13"><path d="M3 6L5.5 8.8L10 3.8" stroke="#2a9a2a" stroke-width="2.2" fill="none"/></svg>
<div class="t" style="left:935px;top:151px;color:#000;">Высокий приоритет процесса при записи</div>
<div style="left:921px;top:173px;width:268px;height:22px;border:1px solid #d4d0c8;border-right-color:#fff;border-bottom-color:#fff;"></div>
<div style="left:925px;top:180px;width:11px;height:11px;border:1px solid #1c5180;border-radius:50%;background:linear-gradient(135deg,#dcdcd7,#fff);"></div>
<div style="left:928.5px;top:183.5px;width:5px;height:5px;border-radius:50%;background:radial-gradient(#8be08b,#21a121);"></div>
<div class="t" style="left:941px;top:180px;color:#000;">Запись в файл</div>
<div style="left:1061px;top:180px;width:11px;height:11px;border:1px solid #cad6e2;border-radius:50%;background:linear-gradient(135deg,#dcdcd7,#fff);"></div>
<div class="t" style="left:1077px;top:180px;color:#aeacae;">Вещание в IP сеть</div>
<div class="t" style="left:921px;top:205px;color:#000;">Путь для записываемых файлов</div>
<div style="left:921px;top:220px;width:244px;height:17px;border:1px solid #a2a6ac;background:#fff;"></div>
<div class="t" style="left:924px;top:223.5px;color:#000;width:240px;overflow:hidden;">C:\Beholder\Record\Video\</div>
<svg style="position:absolute;left:1171px;top:222px" width="18" height="15" viewBox="0 0 18 15">
<path d="M1 2.5H6L7.5 4H14V13H1Z" fill="#e8c040" stroke="#b08820" stroke-width="0.8"/>
<path d="M3 6.5H17L14.5 13.5H1Z" fill="#fce078" stroke="#c09830" stroke-width="0.8"/>
</svg>
<div class="t" style="left:921px;top:246px;color:#000;">Шаблон имени файла</div>
<div style="left:1129px;top:245px;width:11px;height:11px;border:1px solid #243a5e;background:linear-gradient(135deg,#d6dce2,#fcfdfc);"></div>
<svg style="position:absolute;left:1129px;top:245px" width="13" height="13"><path d="M3 6L5.5 8.8L10 3.8" stroke="#2a9a2a" stroke-width="2.2" fill="none"/></svg>
<div class="t" style="left:1145px;top:246px;color:#000;">Лог</div>
<div style="left:921px;top:262px;width:244px;height:18px;border:1px solid #a2a6ac;background:#fff;"></div>
<div class="t" style="left:924px;top:266.0px;color:#000;width:240px;overflow:hidden;">%channel% (%yy%%mm%%dd%-%hh%%nn%%ss%)</div>
<div class="t" style="left:1173px;top:266px;color:#000;">...</div>
<div style="left:920px;top:292px;width:11px;height:11px;border:1px solid #243a5e;background:linear-gradient(135deg,#d6dce2,#fcfdfc);"></div>
<div class="t" style="left:935px;top:293px;color:#000;">Разрешить перезапись существующего файла</div>
<div style="left:920px;top:313px;width:11px;height:11px;border:1px solid #cad6e2;background:#fff;"></div>
<div class="t" style="left:935px;top:314px;color:#aeacae;">Разбивать файлы по</div>
<div style="left:1064px;top:310px;width:101px;height:18px;border:1px solid #c9d5e6;background:#fff;"></div>
<div class="t" style="left:1067px;top:314.0px;color:#aeacae;width:97px;overflow:hidden;">4095</div>
<div style="left:1151px;top:313px;width:11px;height:4px;border:1px solid #c8d4e8;border-radius:2px;background:linear-gradient(#f4f8fc,#e4ecf8);"></div>
<div style="left:1151px;top:320px;width:11px;height:4px;border:1px solid #c8d4e8;border-radius:2px;background:linear-gradient(#f4f8fc,#e4ecf8);"></div>
<svg style="position:absolute;left:1151px;top:313px" width="13" height="16"><path d="M3.0 4.8L6.5 1.2L10.0 4.8Z M3.0 8.2L6.5 11.8L10.0 8.2Z" fill="#b8c8e0"/></svg>
<div class="t" style="left:1171px;top:314px;color:#aeacae;">МБ</div>
<div style="left:0px;top:348px;width:606px;height:348px;background:#2848a8;"></div>
<div style="left:2px;top:366px;width:602px;height:330px;background:#ecebef;"></div>
<div style="left:0px;top:348px;width:605px;height:18px;background:linear-gradient(to bottom,#70aaee 0px,#66a2ea 3px,#3e7cd8 5px,#3472d0 9px,#2c62c4 13px,#2852b2 16px,#2648a0 19px);"></div>
<div class="t" style="left:2px;top:352px;color:#fff;font-size:11.2px;font-weight:bold;-webkit-text-stroke:0.25px #fff;letter-spacing:0.1px;">Панель записи</div>
<div style="left:591px;top:352px;width:9px;height:9px;border:1px solid #c4dcfc;border-radius:1px;background:linear-gradient(#6ea4f0,#4a80e0);"></div>
<svg style="position:absolute;left:591px;top:352px" width="11" height="11"><path d="M2.8 2.8L8.2 8.2M8.2 2.8L2.8 8.2" stroke="#fff" stroke-width="2.6"/></svg>
<div style="left:4px;top:389px;width:597px;height:304px;border:1px solid #919b9c;background:#ecebef;"></div>
<div style="left:7px;top:371px;width:45px;height:17px;border:1px solid #919b9c;border-bottom:none;border-radius:3px 3px 0 0;background:linear-gradient(#fdfdfd,#f2f2f2 50%,#d8e2f0 85%,#c8d6ea);"></div>
<div class="t" style="left:-169.5px;width:400px;text-align:center;top:375px;color:#000;">Запись</div>
<div style="left:53px;top:371px;width:172px;height:17px;border:1px solid #919b9c;border-bottom:none;border-radius:3px 3px 0 0;background:linear-gradient(#fdfdfd,#f2f2f2 50%,#d8e2f0 85%,#c8d6ea);"></div>
<div class="t" style="left:-60.0px;width:400px;text-align:center;top:375px;color:#000;">Настройки записи видео/аудио</div>
<div style="left:367px;top:371px;width:46px;height:17px;border:1px solid #919b9c;border-bottom:none;border-radius:3px 3px 0 0;background:linear-gradient(#fdfdfd,#f2f2f2 50%,#d8e2f0 85%,#c8d6ea);"></div>
<div class="t" style="left:191.0px;width:400px;text-align:center;top:375px;color:#000;">Снимок</div>
<div style="left:226px;top:368px;width:140px;height:22px;border:1px solid #919b9c;border-bottom:none;border-radius:3px 3px 0 0;background:#fcfcfe;"></div>
<div style="left:226px;top:368px;width:142px;height:3px;background:linear-gradient(#e6a040,#f8c860);border-radius:3px 3px 0 0;"></div>
<div class="t" style="left:97.0px;width:400px;text-align:center;top:372px;color:#000;">Настройки записи аудио</div>
<div style="left:11px;top:399px;width:583px;height:35px;border:1px solid #d2d0d6;border-radius:4px;"></div>
<div class="t" style="left:17px;top:393px;padding:0 2px;background:#ecebef;color:#33508a;">Пресеты для аудио записи</div>
<svg style="position:absolute;left:537px;top:410px" width="17" height="17" viewBox="0 0 17 17">
<defs><linearGradient id="sg537" x1="0" y1="0" x2="0" y2="1"><stop offset="0" stop-color="#ffffff"/><stop offset="1" stop-color="#a8c4f0"/></linearGradient></defs>
<path d="M1 1H8.5L11.5 4V6.5H6.5V15.5H1Z" fill="url(#sg537)" stroke="#8088a8" stroke-width="1.2"/>
<path d="M6.5 6.5H15.5V15.5H6.5Z" fill="#30307a"/>
<rect x="8.5" y="7.5" width="5" height="3.5" fill="#e8eefc"/>
<rect x="8.5" y="12.5" width="5" height="3" fill="#e8eefc"/><rect x="9.5" y="13" width="1.5" height="2" fill="#30307a"/>
</svg>
<svg style="position:absolute;left:565px;top:409px" width="17" height="17"><path d="M1.5 1.5L15.5 15.5M15.5 1.5L1.5 15.5" stroke="#5a5a5a" stroke-width="2"/></svg>
<div style="left:20px;top:408px;width:506px;height:18px;border:1px solid #a2a6ac;background:#fff;"></div>
<div style="left:23px;top:411px;width:485px;height:14px;background:#2d5fae;"></div>
<div style="left:510px;top:409px;width:15px;height:16px;border:1px solid #b8c8e8;border-radius:2px;background:linear-gradient(#e0eafc,#c4d4f4 50%,#b0c4ec);"></div>
<svg style="position:absolute;left:510px;top:409px" width="17" height="18"><path d="M4.5 7.0L8.5 11.0L12.5 7.0" stroke="#4d6185" stroke-width="2" fill="none"/></svg>
<div class="t" style="left:23px;top:412.0px;color:#fff;width:485px;overflow:hidden;">&lt; Выбор пресета для загрузки конфигурации... &gt;</div>
<div style="left:11px;top:448px;width:283px;height:37px;border:1px solid #d2d0d6;border-radius:4px;"></div>
<div class="t" style="left:17px;top:442px;padding:0 2px;background:#ecebef;color:#33508a;">Способ аудиозаписи</div>
<div style="left:20px;top:457px;width:264px;height:19px;border:1px solid #a2a6ac;background:#fff;"></div>
<div style="left:268px;top:458px;width:15px;height:17px;border:1px solid #b8c8e8;border-radius:2px;background:linear-gradient(#e0eafc,#c4d4f4 50%,#b0c4ec);"></div>
<svg style="position:absolute;left:268px;top:458px" width="17" height="19"><path d="M4.5 7.5L8.5 11.5L12.5 7.5" stroke="#4d6185" stroke-width="2" fill="none"/></svg>
<div class="t" style="left:23px;top:461.5px;color:#000;width:243px;overflow:hidden;">Software MPEG Audio (InterVideo)</div>
<div style="left:11px;top:497px;width:283px;height:137px;border:1px solid #d2d0d6;border-radius:4px;"></div>
<div class="t" style="left:17px;top:491px;padding:0 2px;background:#ecebef;color:#33508a;">Software MPEG Audio (InterVideo)</div>
<div class="t" style="left:20px;top:507px;color:#000;">Профиль энкодера</div>
<div style="left:20px;top:521px;width:264px;height:19px;border:1px solid #a2a6ac;background:#fff;"></div>
<div style="left:268px;top:522px;width:15px;height:17px;border:1px solid #b8c8e8;border-radius:2px;background:linear-gradient(#e0eafc,#c4d4f4 50%,#b0c4ec);"></div>
<svg style="position:absolute;left:268px;top:522px" width="17" height="19"><path d="M4.5 7.5L8.5 11.5L12.5 7.5" stroke="#4d6185" stroke-width="2" fill="none"/></svg>
<div class="t" style="left:23px;top:525.5px;color:#000;width:243px;overflow:hidden;">Audio Elementary Stream (*.mpa)</div>
<div class="t" style="left:20px;top:549px;color:#000;">Аудио формат</div>
<div class="t" style="left:158px;top:549px;color:#000;">Частота выборки</div>
<div style="left:20px;top:563px;width:125px;height:19px;border:1px solid #a2a6ac;background:#fff;"></div>
<div style="left:129px;top:564px;width:15px;height:17px;border:1px solid #b8c8e8;border-radius:2px;background:linear-gradient(#e0eafc,#c4d4f4 50%,#b0c4ec);"></div>
<svg style="position:absolute;left:129px;top:564px" width="17" height="19"><path d="M4.5 7.5L8.5 11.5L12.5 7.5" stroke="#4d6185" stroke-width="2" fill="none"/></svg>
<div class="t" style="left:23px;top:567.5px;color:#000;width:104px;overflow:hidden;">MPEG-1 Layer II</div>
<div style="left:158px;top:563px;width:125px;height:19px;border:1px solid #a2a6ac;background:#fff;"></div>
<div style="left:267px;top:564px;width:15px;height:17px;border:1px solid #b8c8e8;border-radius:2px;background:linear-gradient(#e0eafc,#c4d4f4 50%,#b0c4ec);"></div>
<svg style="position:absolute;left:267px;top:564px" width="17" height="19"><path d="M4.5 7.5L8.5 11.5L12.5 7.5" stroke="#4d6185" stroke-width="2" fill="none"/></svg>
<div class="t" style="left:161px;top:567.5px;color:#000;width:104px;overflow:hidden;">48000 Hz</div>
<div class="t" style="left:20px;top:591px;color:#000;">Аудио битрейт</div>
<div class="t" style="left:158px;top:591px;color:#000;">Кодирование каналов</div>
<div style="left:20px;top:605px;width:125px;height:19px;border:1px solid #a2a6ac;background:#fff;"></div>
<div style="left:129px;top:606px;width:15px;height:17px;border:1px solid #b8c8e8;border-radius:2px;background:linear-gradient(#e0eafc,#c4d4f4 50%,#b0c4ec);"></div>
<svg style="position:absolute;left:129px;top:606px" width="17" height="19"><path d="M4.5 7.5L8.5 11.5L12.5 7.5" stroke="#4d6185" stroke-width="2" fill="none"/></svg>
<div class="t" style="left:23px;top:609.5px;color:#000;width:104px;overflow:hidden;">224 kBit/s</div>
<div style="left:158px;top:605px;width:125px;height:19px;border:1px solid #a2a6ac;background:#fff;"></div>
<div style="left:267px;top:606px;width:15px;height:17px;border:1px solid #b8c8e8;border-radius:2px;background:linear-gradient(#e0eafc,#c4d4f4 50%,#b0c4ec);"></div>
<svg style="position:absolute;left:267px;top:606px" width="17" height="19"><path d="M4.5 7.5L8.5 11.5L12.5 7.5" stroke="#4d6185" stroke-width="2" fill="none"/></svg>
<div class="t" style="left:161px;top:609.5px;color:#000;width:104px;overflow:hidden;">Stereo</div>
<div style="left:10px;top:656px;width:284px;height:30px;border:1px solid #a0a0a0;border-top-color:#fff;border-left-color:#fff;background:#ebeaee;"></div>
<div class="t" style="left:53px;top:667px;color:#000;">Устройство записи звука (общие настройки)</div>
<div style="left:305px;top:448px;width:289px;height:237px;border:1px solid #d2d0d6;border-radius:4px;"></div>
<div class="t" style="left:311px;top:442px;padding:0 2px;background:#ecebef;color:#33508a;">Дополнительные настройки</div>
<div style="left:314px;top:460px;width:11px;height:11px;border:1px solid #cad6e2;background:#fff;"></div>
<div class="t" style="left:329px;top:461px;color:#aeacae;">Запись аудио потока через шину PCI</div>
<div style="left:314px;top:480px;width:11px;height:11px;border:1px solid #243a5e;background:linear-gradient(135deg,#d6dce2,#fcfdfc);"></div>
<div class="t" style="left:329px;top:481px;color:#000;">Отключать прослушивание во время записи</div>
<div style="left:314px;top:501px;width:11px;height:11px;border:1px solid #243a5e;background:linear-gradient(135deg,#d6dce2,#fcfdfc);"></div>
<div class="t" style="left:329px;top:502px;color:#000;">Высокий приоритет процесса при записи</div>
<div style="left:313px;top:523px;width:270px;height:22px;border:1px solid #d4d0c8;border-right-color:#fff;border-bottom-color:#fff;"></div>
<div style="left:320px;top:530px;width:11px;height:11px;border:1px solid #1c5180;border-radius:50%;background:linear-gradient(135deg,#dcdcd7,#fff);"></div>
<div style="left:323.5px;top:533.5px;width:5px;height:5px;border-radius:50%;background:radial-gradient(#8be08b,#21a121);"></div>
<div class="t" style="left:336px;top:530px;color:#000;">Запись в файл</div>
<div style="left:456px;top:530px;width:11px;height:11px;border:1px solid #1c5180;border-radius:50%;background:linear-gradient(135deg,#dcdcd7,#fff);"></div>
<div class="t" style="left:471px;top:530px;color:#000;">Вещание в IP сеть</div>
<div class="t" style="left:314px;top:555px;color:#000;">Путь для записываемых файлов</div>
<div style="left:314px;top:569px;width:245px;height:18px;border:1px solid #a2a6ac;background:#fff;"></div>
<div class="t" style="left:317px;top:573.0px;color:#000;width:241px;overflow:hidden;">C:\Beholder\Record\Audio\</div>
<svg style="position:absolute;left:565px;top:571px" width="18" height="15" viewBox="0 0 18 15">
<path d="M1 2.5H6L7.5 4H14V13H1Z" fill="#e8c040" stroke="#b08820" stroke-width="0.8"/>
<path d="M3 6.5H17L14.5 13.5H1Z" fill="#fce078" stroke="#c09830" stroke-width="0.8"/>
</svg>
<div class="t" style="left:314px;top:596px;color:#000;">Шаблон имени файла</div>
<div style="left:523px;top:595px;width:11px;height:11px;border:1px solid #243a5e;background:linear-gradient(135deg,#d6dce2,#fcfdfc);"></div>
<div class="t" style="left:538px;top:596px;color:#000;">Лог</div>
<div style="left:314px;top:611px;width:245px;height:19px;border:1px solid #a2a6ac;background:#fff;"></div>
<div class="t" style="left:317px;top:615.5px;color:#000;width:241px;overflow:hidden;">%channel% (%yy%%mm%%dd%-%hh%%nn%%ss%)</div>
<div class="t" style="left:567px;top:616px;color:#000;">...</div>
<div style="left:314px;top:641px;width:11px;height:11px;border:1px solid #243a5e;background:linear-gradient(135deg,#d6dce2,#fcfdfc);"></div>
<div class="t" style="left:329px;top:643px;color:#000;">Разрешить перезапись существующего файла</div>
<div style="left:314px;top:663px;width:11px;height:11px;border:1px solid #243a5e;background:linear-gradient(135deg,#d6dce2,#fcfdfc);"></div>
<div class="t" style="left:329px;top:664px;color:#000;">Разбивать файлы по</div>
<div style="left:458px;top:660px;width:101px;height:18px;border:1px solid #c9d5e6;background:#fff;"></div>
<div class="t" style="left:461px;top:664.0px;color:#aeacae;width:97px;overflow:hidden;">4095</div>
<div style="left:545px;top:663px;width:11px;height:4px;border:1px solid #c8d4e8;border-radius:2px;background:linear-gradient(#f4f8fc,#e4ecf8);"></div>
<div style="left:545px;top:670px;width:11px;height:4px;border:1px solid #c8d4e8;border-radius:2px;background:linear-gradient(#f4f8fc,#e4ecf8);"></div>
<svg style="position:absolute;left:545px;top:663px" width="13" height="16"><path d="M3.0 4.8L6.5 1.2L10.0 4.8Z M3.0 8.2L6.5 11.8L10.0 8.2Z" fill="#b8c8e0"/></svg>
<div class="t" style="left:565px;top:664px;color:#aeacae;">МБ</div>
<div style="left:605px;top:348px;width:768px;height:395px;background:#2848a8;"></div>
<div style="left:605px;top:348px;width:2px;height:395px;background:#2a4aa8;"></div>
<div style="left:607px;top:369px;width:766px;height:374px;background:#ecebef;"></div>
<div style="left:606px;top:349px;width:767px;height:20px;background:linear-gradient(to bottom,#70aaee 0px,#66a2ea 3px,#3e7cd8 5px,#3472d0 9px,#2c62c4 13px,#2852b2 16px,#2648a0 19px);"></div>
<div class="t" style="left:608px;top:352.5px;color:#fff;font-size:11.6px;font-weight:bold;-webkit-text-stroke:0.25px #fff;letter-spacing:0.1px;">Настройки - Аудио</div>
<div style="left:606px;top:348px;width:767px;height:1px;background:#e8e6f0;"></div>
<div style="left:612px;top:373px;width:115px;height:370px;background:#808080;"></div>
<div style="left:634px;top:503px;width:39px;height:16px;background:#2d5fae;"></div>
<div class="t" style="left:636px;top:377px;color:#fff;">ТВ каналы</div>
<div class="t" style="left:653px;top:393px;color:#fff;">ТВ</div>
<div class="t" style="left:653px;top:409px;color:#a8a8a8;">DVB-T ТВ</div>
<div class="t" style="left:636px;top:425px;color:#fff;">Радио каналы</div>
<div class="t" style="left:653px;top:441px;color:#fff;">FM радио</div>
<div class="t" style="left:653px;top:457px;color:#a8a8a8;">DVB-T радио</div>
<div class="t" style="left:636px;top:473px;color:#fff;">AV входы</div>
<div class="t" style="left:636px;top:489px;color:#fff;">Видео</div>
<div class="t" style="left:636px;top:505px;color:#fff;">Аудио</div>
<div class="t" style="left:636px;top:521px;color:#a8a8a8;">DVB поток</div>
<div class="t" style="left:636px;top:537px;color:#fff;">Интерфейс</div>
<div class="t" style="left:636px;top:553px;color:#fff;">Таймшифт</div>
<div class="t" style="left:636px;top:569px;color:#fff;">Пульт ДУ</div>
<div class="t" style="left:636px;top:585px;color:#fff;">Управление</div>
<div class="t" style="left:636px;top:601px;color:#fff;">LCD и OSD</div>
<div class="t" style="left:636px;top:617px;color:#fff;">О тюнере</div>
<div class="t" style="left:636px;top:633px;color:#fff;">О программе</div>
<div style="left:736px;top:383px;width:330px;height:96px;border:1px solid #d2d0d6;border-radius:4px;"></div>
<div class="t" style="left:742px;top:377px;padding:0 2px;background:#ecebef;color:#33508a;">Устройство воспроизведения</div>
<div class="t" style="left:745px;top:394px;color:#000;">Устройство микшера</div>
<div style="left:745px;top:408px;width:311px;height:19px;border:1px solid #a2a6ac;background:#fff;"></div>
<div style="left:1040px;top:409px;width:15px;height:17px;border:1px solid #b8c8e8;border-radius:2px;background:linear-gradient(#e0eafc,#c4d4f4 50%,#b0c4ec);"></div>
<svg style="position:absolute;left:1040px;top:409px" width="17" height="19"><path d="M4.5 7.5L8.5 11.5L12.5 7.5" stroke="#4d6185" stroke-width="2" fill="none"/></svg>
<div class="t" style="left:748px;top:412.5px;color:#000;width:290px;overflow:hidden;">Realtek HD Audio output</div>
<div class="t" style="left:745px;top:435px;color:#000;">Устройство DirectSound</div>
<div style="left:745px;top:450px;width:311px;height:19px;border:1px solid #a2a6ac;background:#fff;"></div>
<div style="left:1040px;top:451px;width:15px;height:17px;border:1px solid #b8c8e8;border-radius:2px;background:linear-gradient(#e0eafc,#c4d4f4 50%,#b0c4ec);"></div>
<svg style="position:absolute;left:1040px;top:451px" width="17" height="19"><path d="M4.5 7.5L8.5 11.5L12.5 7.5" stroke="#4d6185" stroke-width="2" fill="none"/></svg>
<div class="t" style="left:748px;top:454.5px;color:#000;width:290px;overflow:hidden;">Realtek HD Audio output</div>
<div style="left:736px;top:494px;width:330px;height:80px;border:1px solid #d2d0d6;border-radius:4px;"></div>
<div class="t" style="left:742px;top:488px;padding:0 2px;background:#ecebef;color:#33508a;">Вывод звука</div>
<div style="left:743px;top:505px;width:11px;height:11px;border:1px solid #1c5180;border-radius:50%;background:linear-gradient(135deg,#dcdcd7,#fff);"></div>
<div style="left:746.5px;top:508.5px;width:5px;height:5px;border-radius:50%;background:radial-gradient(#8be08b,#21a121);"></div>
<div class="t" style="left:759px;top:506px;color:#000;">Аналоговый выход (через аудиокабель)</div>
<div style="left:743px;top:527px;width:11px;height:11px;border:1px solid #cad6e2;border-radius:50%;background:linear-gradient(135deg,#dcdcd7,#fff);"></div>
<div class="t" style="left:759px;top:527px;color:#aeacae;">DirectSound PCM аудио (через шину PCI)</div>
<div style="left:745px;top:548px;width:286px;height:15px;border:1px solid #fff;border-top-color:#a0a0a0;border-left-color:#a0a0a0;background:#ecebef;"></div>
<div class="t" style="left:748px;top:550px;color:#5a5a5a;">Линия управления звуком: "SPDIF"</div>
<svg style="position:absolute;left:1037px;top:545px" width="20" height="20"><circle cx="6.5" cy="6.5" r="4" fill="#40c040" stroke="#108010" stroke-width="2.2" stroke-dasharray="1.6 1.4"/><circle cx="6.5" cy="6.5" r="1.40" fill="#108010"/><circle cx="12.5" cy="12" r="4.5" fill="#f0b030" stroke="#b07010" stroke-width="2.2" stroke-dasharray="1.6 1.4"/><circle cx="12.5" cy="12" r="1.57" fill="#b07010"/></svg>
<div style="left:736px;top:588px;width:330px;height:145px;border:1px solid #d2d0d6;border-radius:4px;"></div>
<div class="t" style="left:742px;top:582px;padding:0 2px;background:#ecebef;color:#33508a;">Параметры управления звуком</div>
<div class="t" style="left:745px;top:598px;color:#000;">Режим управления громкостью</div>
<div style="left:745px;top:613px;width:311px;height:19px;border:1px solid #a2a6ac;background:#fff;"></div>
<div style="left:1040px;top:614px;width:15px;height:17px;border:1px solid #b8c8e8;border-radius:2px;background:linear-gradient(#e0eafc,#c4d4f4 50%,#b0c4ec);"></div>
<svg style="position:absolute;left:1040px;top:614px" width="17" height="19"><path d="M4.5 7.5L8.5 11.5L12.5 7.5" stroke="#4d6185" stroke-width="2" fill="none"/></svg>
<div class="t" style="left:748px;top:617.5px;color:#000;width:290px;overflow:hidden;">Относительная громкость для каждого канала</div>
<div style="left:745px;top:644px;width:11px;height:11px;border:1px solid #243a5e;background:linear-gradient(135deg,#d6dce2,#fcfdfc);"></div>
<svg style="position:absolute;left:745px;top:644px" width="13" height="13"><path d="M3 6L5.5 8.8L10 3.8" stroke="#2a9a2a" stroke-width="2.2" fill="none"/></svg>
<div class="t" style="left:760px;top:645px;color:#000;">Управлять общей линией громкости аудио микшера</div>
<div style="left:745px;top:664px;width:11px;height:11px;border:1px solid #243a5e;background:linear-gradient(135deg,#d6dce2,#fcfdfc);"></div>
<svg style="position:absolute;left:745px;top:664px" width="13" height="13"><path d="M3 6L5.5 8.8L10 3.8" stroke="#2a9a2a" stroke-width="2.2" fill="none"/></svg>
<div class="t" style="left:760px;top:665px;color:#000;">Сохранять громкость общей линии в настройках</div>
<div style="left:745px;top:684px;width:11px;height:11px;border:1px solid #243a5e;background:linear-gradient(135deg,#d6dce2,#fcfdfc);"></div>
<svg style="position:absolute;left:745px;top:684px" width="13" height="13"><path d="M3 6L5.5 8.8L10 3.8" stroke="#2a9a2a" stroke-width="2.2" fill="none"/></svg>
<div class="t" style="left:760px;top:685px;color:#000;">Нелинейная шкала главного уровня громкости Behold TV</div>
<div class="t" style="left:745px;top:710px;color:#000;">Шаг громкости (%)</div>
<div style="left:850px;top:706px;width:44px;height:19px;border:1px solid #c9d5e6;background:#fff;"></div>
<div class="t" style="left:853px;top:710.5px;color:#aeacae;width:40px;overflow:hidden;">20</div>
<div style="left:880px;top:709px;width:11px;height:5px;border:1px solid #c8d4e8;border-radius:2px;background:linear-gradient(#f4f8fc,#e4ecf8);"></div>
<div style="left:880px;top:717px;width:11px;height:5px;border:1px solid #c8d4e8;border-radius:2px;background:linear-gradient(#f4f8fc,#e4ecf8);"></div>
<svg style="position:absolute;left:880px;top:709px" width="13" height="17"><path d="M3.0 5.3L6.5 1.7L10.0 5.3Z M3.0 9.7L6.5 13.3L10.0 9.7Z" fill="#b8c8e0"/></svg>
<div class="t" style="left:906px;top:710px;color:#000;">Гашение звука (мс)</div>
<div style="left:1012px;top:706px;width:44px;height:19px;border:1px solid #a2a6ac;background:#fff;"></div>
<div class="t" style="left:1015px;top:710.5px;color:#000;width:40px;overflow:hidden;">250</div>
<div style="left:1042px;top:709px;width:11px;height:5px;border:1px solid #8890a8;border-radius:2px;background:linear-gradient(#fafcff,#d8e2f2);"></div>
<div style="left:1042px;top:717px;width:11px;height:5px;border:1px solid #8890a8;border-radius:2px;background:linear-gradient(#fafcff,#d8e2f2);"></div>
<svg style="position:absolute;left:1042px;top:709px" width="13" height="17"><path d="M3.0 5.3L6.5 1.7L10.0 5.3Z M3.0 9.7L6.5 13.3L10.0 9.7Z" fill="#4a5470"/></svg>
<div style="left:1078px;top:383px;width:298px;height:259px;border:1px solid #d2d0d6;border-radius:4px;"></div>
<div class="t" style="left:1084px;top:377px;padding:0 2px;background:#ecebef;color:#33508a;">Расширенные параметры аналогового аудио</div>
<div style="left:1087px;top:401px;width:288px;height:53px;border:1px solid #d2d0d6;border-radius:4px;"></div>
<div class="t" style="left:1093px;top:395px;padding:0 2px;background:#ecebef;color:#33508a;">Промежуточная частота TV звука (SIF)</div>
<div class="t" style="left:1097px;top:409px;color:#aeacae;">Входное усиление</div>
<div class="t" style="right:33px;top:409px;color:#aeacae;">12,4 dB</div>
<div style="left:1097px;top:424px;width:118px;height:19px;border:1px solid #c9d5e6;background:#fff;"></div>
<div style="left:1199px;top:425px;width:17px;height:19px;background:#dde8f8;"></div>
<svg style="position:absolute;left:1199px;top:425px" width="17" height="19"><path d="M4.5 7.5L8.5 11.5L12.5 7.5" stroke="#b8c8e0" stroke-width="2" fill="none"/></svg>
<div class="t" style="left:1100px;top:428.5px;color:#aeacae;width:97px;overflow:hidden;">-6 dB (160 mV)</div>
<div style="left:1228px;top:429px;width:11px;height:11px;border:1px solid #cad6e2;background:#fff;"></div>
<svg style="position:absolute;left:1228px;top:429px" width="13" height="13"><path d="M3 6L5.5 8.8L10 3.8" stroke="#c8c8c8" stroke-width="2.2" fill="none"/></svg>
<div class="t" style="left:1244px;top:430px;color:#aeacae;">Автоуровень</div>
<div style="left:1087px;top:468px;width:288px;height:118px;border:1px solid #d2d0d6;border-radius:4px;"></div>
<div class="t" style="left:1093px;top:462px;padding:0 2px;background:#ecebef;color:#33508a;">Уровень громкости декодера</div>
<div class="t" style="left:913px;width:400px;text-align:center;top:477px;color:#aeacae;">0 dB</div>
<div class="t" style="left:913px;width:400px;text-align:center;top:569px;color:#aeacae;">Main</div>
<div class="t" style="left:995px;width:400px;text-align:center;top:477px;color:#aeacae;">0 dB</div>
<div class="t" style="left:995px;width:400px;text-align:center;top:569px;color:#aeacae;">A2/Mono</div>
<div class="t" style="left:1077px;width:400px;text-align:center;top:477px;color:#aeacae;">0 dB</div>
<div class="t" style="left:1077px;width:400px;text-align:center;top:569px;color:#aeacae;">NICAM</div>
<div class="t" style="left:1158px;width:400px;text-align:center;top:477px;color:#aeacae;">6 dB</div>
<div class="t" style="left:1158px;width:400px;text-align:center;top:569px;color:#aeacae;">PCI</div>
<div class="t" style="left:1088px;top:598px;color:#aeacae;">АРУ звука</div>
<div class="t" style="left:1241px;top:598px;color:#000;">Чувствительность: TV</div>
<div style="left:1087px;top:614px;width:144px;height:18px;border:1px solid #c9d5e6;background:#fff;"></div>
<div style="left:1215px;top:615px;width:17px;height:18px;background:#dde8f8;"></div>
<svg style="position:absolute;left:1215px;top:615px" width="17" height="18"><path d="M4.5 7.0L8.5 11.0L12.5 7.0" stroke="#b8c8e0" stroke-width="2" fill="none"/></svg>
<div class="t" style="left:1090px;top:618.0px;color:#aeacae;width:123px;overflow:hidden;">АРУ выключено</div>
<div style="left:1240px;top:614px;width:145px;height:18px;border:1px solid #a2a6ac;background:#fff;"></div>
<div style="left:1369px;top:615px;width:15px;height:16px;border:1px solid #b8c8e8;border-radius:2px;background:linear-gradient(#e0eafc,#c4d4f4 50%,#b0c4ec);"></div>
<svg style="position:absolute;left:1369px;top:615px" width="17" height="18"><path d="M4.5 7.0L8.5 11.0L12.5 7.0" stroke="#4d6185" stroke-width="2" fill="none"/></svg>
<div class="t" style="left:1243px;top:618.0px;color:#000;width:124px;overflow:hidden;">2 Vrms</div>
<div style="left:1078px;top:657px;width:298px;height:76px;border:1px solid #d2d0d6;border-radius:4px;"></div>
<div class="t" style="left:1084px;top:651px;padding:0 2px;background:#ecebef;color:#33508a;">ВЧ радиомодуль - аудио опции</div>
<div style="left:1087px;top:671px;width:11px;height:11px;border:1px solid #cad6e2;background:#fff;"></div>
<svg style="position:absolute;left:1087px;top:671px" width="13" height="13"><path d="M3 6L5.5 8.8L10 3.8" stroke="#c8c8c8" stroke-width="2.2" fill="none"/></svg>
<div class="t" style="left:1102px;top:672px;color:#aeacae;">Автогашение звука при слабом сигнале (FM)</div>
<div style="left:1087px;top:691px;width:11px;height:11px;border:1px solid #243a5e;background:linear-gradient(135deg,#d6dce2,#fcfdfc);"></div>
<svg style="position:absolute;left:1087px;top:691px" width="13" height="13"><path d="M3 6L5.5 8.8L10 3.8" stroke="#2a9a2a" stroke-width="2.2" fill="none"/></svg>
<div class="t" style="left:1102px;top:692px;color:#000;">Автогашение звука при слабом сигнале (TV)</div>
<div style="left:1087px;top:711px;width:11px;height:11px;border:1px solid #243a5e;background:linear-gradient(135deg,#d6dce2,#fcfdfc);"></div>
<svg style="position:absolute;left:1087px;top:711px" width="13" height="13"><path d="M3 6L5.5 8.8L10 3.8" stroke="#2a9a2a" stroke-width="2.2" fill="none"/></svg>
<div class="t" style="left:1102px;top:712px;color:#000;">Коррекция высоких частот звука (TV)</div>
<div style="left:625px;top:388px;width:1px;height:252px;background:repeating-linear-gradient(#b0b0b0 0 1px,transparent 1px 2px);"></div>
<div style="left:642px;top:391px;width:1px;height:25px;background:repeating-linear-gradient(#b0b0b0 0 1px,transparent 1px 2px);"></div>
<div style="left:642px;top:439px;width:1px;height:25px;background:repeating-linear-gradient(#b0b0b0 0 1px,transparent 1px 2px);"></div>
<div style="left:643px;top:400px;width:8px;height:1px;background:repeating-linear-gradient(90deg,#b0b0b0 0 1px,transparent 1px 2px);"></div>
<div style="left:643px;top:416px;width:8px;height:1px;background:repeating-linear-gradient(90deg,#b0b0b0 0 1px,transparent 1px 2px);"></div>
<div style="left:643px;top:448px;width:8px;height:1px;background:repeating-linear-gradient(90deg,#b0b0b0 0 1px,transparent 1px 2px);"></div>
<div style="left:643px;top:464px;width:8px;height:1px;background:repeating-linear-gradient(90deg,#b0b0b0 0 1px,transparent 1px 2px);"></div>
<div style="left:626px;top:480px;width:8px;height:1px;background:repeating-linear-gradient(90deg,#b0b0b0 0 1px,transparent 1px 2px);"></div>
<div style="left:626px;top:496px;width:8px;height:1px;background:repeating-linear-gradient(90deg,#b0b0b0 0 1px,transparent 1px 2px);"></div>
<div style="left:626px;top:512px;width:8px;height:1px;background:repeating-linear-gradient(90deg,#b0b0b0 0 1px,transparent 1px 2px);"></div>
<div style="left:626px;top:528px;width:8px;height:1px;background:repeating-linear-gradient(90deg,#b0b0b0 0 1px,transparent 1px 2px);"></div>
<div style="left:626px;top:544px;width:8px;height:1px;background:repeating-linear-gradient(90deg,#b0b0b0 0 1px,transparent 1px 2px);"></div>
<div style="left:626px;top:560px;width:8px;height:1px;background:repeating-linear-gradient(90deg,#b0b0b0 0 1px,transparent 1px 2px);"></div>
<div style="left:626px;top:576px;width:8px;height:1px;background:repeating-linear-gradient(90deg,#b0b0b0 0 1px,transparent 1px 2px);"></div>
<div style="left:626px;top:592px;width:8px;height:1px;background:repeating-linear-gradient(90deg,#b0b0b0 0 1px,transparent 1px 2px);"></div>
<div style="left:626px;top:608px;width:8px;height:1px;background:repeating-linear-gradient(90deg,#b0b0b0 0 1px,transparent 1px 2px);"></div>
<div style="left:626px;top:624px;width:8px;height:1px;background:repeating-linear-gradient(90deg,#b0b0b0 0 1px,transparent 1px 2px);"></div>
<div style="left:626px;top:640px;width:8px;height:1px;background:repeating-linear-gradient(90deg,#b0b0b0 0 1px,transparent 1px 2px);"></div>
<div style="left:621px;top:379px;width:8px;height:8px;border:1px solid #a0a0a0;background:linear-gradient(#fff,#c8c8c8);"></div>
<div style="left:623px;top:383px;width:5px;height:1px;background:#000;"></div>
<div style="left:621px;top:427px;width:8px;height:8px;border:1px solid #a0a0a0;background:linear-gradient(#fff,#c8c8c8);"></div>
<div style="left:623px;top:431px;width:5px;height:1px;background:#000;"></div>
<div style="left:1358px;top:408px;width:1px;height:39px;background:#b8b8b8;"></div>
<div style="left:1359px;top:408px;width:2px;height:39px;background:#fff;"></div>
<div style="left:1349px;top:411px;width:3px;height:1px;background:#b0b0b0;"></div>
<div style="left:1367px;top:411px;width:3px;height:1px;background:#b0b0b0;"></div>
<div style="left:1349px;top:427px;width:3px;height:1px;background:#b0b0b0;"></div>
<div style="left:1367px;top:427px;width:3px;height:1px;background:#b0b0b0;"></div>
<div style="left:1349px;top:443px;width:3px;height:1px;background:#b0b0b0;"></div>
<div style="left:1367px;top:443px;width:3px;height:1px;background:#b0b0b0;"></div>
<div style="left:1353px;top:423px;width:11px;height:7px;border:1px solid #c0c0b8;border-radius:2px;background:linear-gradient(#f8f8f0,#e0dcd0);"></div>
<div style="left:1111px;top:494px;width:1px;height:67px;background:#b8b8b8;"></div>
<div style="left:1112px;top:494px;width:2px;height:67px;background:#fff;"></div>
<div style="left:1102px;top:497px;width:3px;height:1px;background:#b0b0b0;"></div>
<div style="left:1120px;top:497px;width:3px;height:1px;background:#b0b0b0;"></div>
<div style="left:1102px;top:517px;width:3px;height:1px;background:#b0b0b0;"></div>
<div style="left:1120px;top:517px;width:3px;height:1px;background:#b0b0b0;"></div>
<div style="left:1102px;top:538px;width:3px;height:1px;background:#b0b0b0;"></div>
<div style="left:1120px;top:538px;width:3px;height:1px;background:#b0b0b0;"></div>
<div style="left:1102px;top:558px;width:3px;height:1px;background:#b0b0b0;"></div>
<div style="left:1120px;top:558px;width:3px;height:1px;background:#b0b0b0;"></div>
<div style="left:1106px;top:554px;width:10px;height:7px;border:1px solid #c0c0b8;border-radius:2px;background:linear-gradient(#f8f8f0,#e0dcd0);"></div>
<div style="left:1193px;top:494px;width:1px;height:67px;background:#b8b8b8;"></div>
<div style="left:1194px;top:494px;width:2px;height:67px;background:#fff;"></div>
<div style="left:1184px;top:497px;width:3px;height:1px;background:#b0b0b0;"></div>
<div style="left:1202px;top:497px;width:3px;height:1px;background:#b0b0b0;"></div>
<div style="left:1184px;top:517px;width:3px;height:1px;background:#b0b0b0;"></div>
<div style="left:1202px;top:517px;width:3px;height:1px;background:#b0b0b0;"></div>
<div style="left:1184px;top:538px;width:3px;height:1px;background:#b0b0b0;"></div>
<div style="left:1202px;top:538px;width:3px;height:1px;background:#b0b0b0;"></div>
<div style="left:1184px;top:558px;width:3px;height:1px;background:#b0b0b0;"></div>
<div style="left:1202px;top:558px;width:3px;height:1px;background:#b0b0b0;"></div>
<div style="left:1188px;top:524px;width:10px;height:7px;border:1px solid #c0c0b8;border-radius:2px;background:linear-gradient(#f8f8f0,#e0dcd0);"></div>
<div style="left:1275px;top:494px;width:1px;height:67px;background:#b8b8b8;"></div>
<div style="left:1276px;top:494px;width:2px;height:67px;background:#fff;"></div>
<div style="left:1266px;top:497px;width:3px;height:1px;background:#b0b0b0;"></div>
<div style="left:1284px;top:497px;width:3px;height:1px;background:#b0b0b0;"></div>
<div style="left:1266px;top:517px;width:3px;height:1px;background:#b0b0b0;"></div>
<div style="left:1284px;top:517px;width:3px;height:1px;background:#b0b0b0;"></div>
<div style="left:1266px;top:538px;width:3px;height:1px;background:#b0b0b0;"></div>
<div style="left:1284px;top:538px;width:3px;height:1px;background:#b0b0b0;"></div>
<div style="left:1266px;top:558px;width:3px;height:1px;background:#b0b0b0;"></div>
<div style="left:1284px;top:558px;width:3px;height:1px;background:#b0b0b0;"></div>
<div style="left:1270px;top:524px;width:10px;height:7px;border:1px solid #c0c0b8;border-radius:2px;background:linear-gradient(#f8f8f0,#e0dcd0);"></div>
<div style="left:1357px;top:494px;width:1px;height:67px;background:#b8b8b8;"></div>
<div style="left:1358px;top:494px;width:2px;height:67px;background:#fff;"></div>
<div style="left:1348px;top:497px;width:3px;height:1px;background:#b0b0b0;"></div>
<div style="left:1366px;top:497px;width:3px;height:1px;background:#b0b0b0;"></div>
<div style="left:1348px;top:517px;width:3px;height:1px;background:#b0b0b0;"></div>
<div style="left:1366px;top:517px;width:3px;height:1px;background:#b0b0b0;"></div>
<div style="left:1348px;top:538px;width:3px;height:1px;background:#b0b0b0;"></div>
<div style="left:1366px;top:538px;width:3px;height:1px;background:#b0b0b0;"></div>
<div style="left:1348px;top:558px;width:3px;height:1px;background:#b0b0b0;"></div>
<div style="left:1366px;top:558px;width:3px;height:1px;background:#b0b0b0;"></div>
<div style="left:1352px;top:511px;width:10px;height:7px;border:1px solid #c0c0b8;border-radius:2px;background:linear-gradient(#f8f8f0,#e0dcd0);"></div>
<svg style="position:absolute;left:27px;top:661px" width="19" height="23" viewBox="0 0 19 23">
<defs><linearGradient id="dv" x1="0" x2="1"><stop offset="0" stop-color="#8a8aa8"/><stop offset="0.5" stop-color="#c8c8dc"/><stop offset="1" stop-color="#8a8aa8"/></linearGradient></defs>
<path d="M1 1H18V21Q9.5 23 1 21Z" fill="url(#dv)" stroke="#606078" stroke-width="0.8"/>
<path d="M3 5H16M3 8H16M3 11H16M3 14H16M3 17H16" stroke="#e8e8f0" stroke-width="0.8"/>
<rect x="8.8" y="2" width="1.6" height="18" fill="#3a3a5a"/><rect x="7" y="4" width="5" height="5" rx="1" fill="#7a7aa8" stroke="#3a3a5a" stroke-width="0.6"/>
</svg>
</body></html>
